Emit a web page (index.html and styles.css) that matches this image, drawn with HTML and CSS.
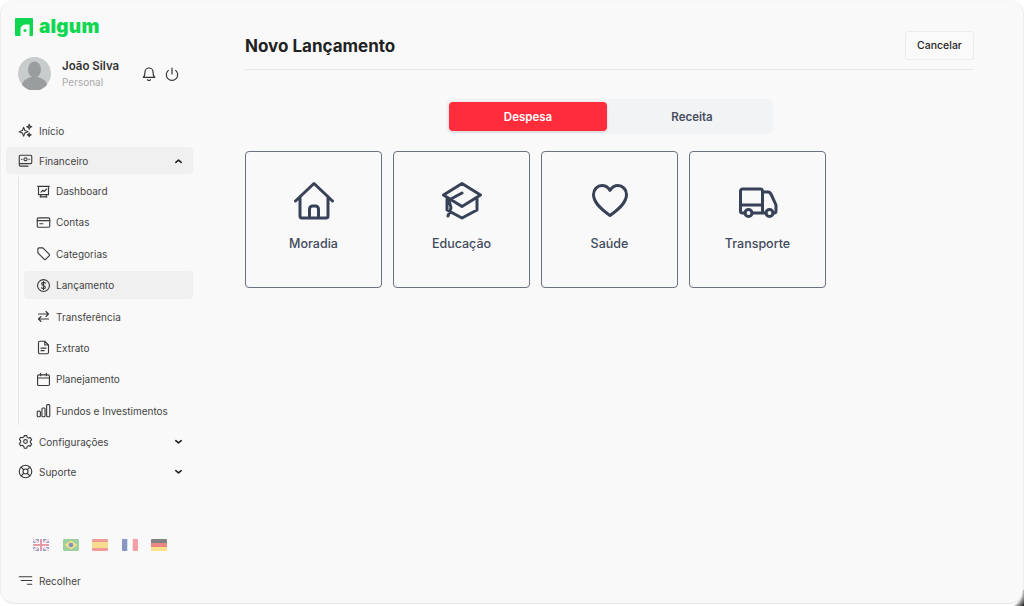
FILE: index.html
```html
<!DOCTYPE html>
<html>

<head>
    <title>Novo Lançamento</title>
    <link rel="stylesheet" href="styles.css">
</head>

<body>
    <div class="window">
        <aside class="sidebar">
            <div class="logo">
                <svg class="logo-mark" width="18" height="18" viewBox="0 0 18 18">
                    <rect width="18" height="18" rx="1" fill="#0fd850" />
                    <path d="M5.5 18v-6.500a5 5 0 0 1 5-5h4v11.500z" fill="#fafafa" />
                    <circle cx="10" cy="12.500" r="1.500" fill="#0fd850" />
                </svg>
                <span class="logo-text">algum</span>
            </div>

            <div class="profile">
                <svg class="avatar" width="33" height="33" viewBox="0 0 33 33">
                    <circle cx="16.5" cy="16.5" r="16.5" fill="#c9cccc" />
                    <ellipse cx="16.5" cy="12.5" rx="6.5" ry="8" fill="#9a9d9e" />
                    <path d="M4 28c1-6 7-7 9-8h7c2 1 8 2 9 8a16.500 16.500 0 0 1-25 0z" fill="#9a9d9e" />
                </svg>
                <div class="profile-info">
                    <div class="profile-name">João Silva</div>
                    <div class="profile-plan">Personal</div>
                </div>
                <svg class="top-icon" width="16" height="16" viewBox="0 0 24 24">
                    <path d="M6 9a6 6 0 0 1 12 0c0 6 2.500 8 2.500 8h-17S6 15 6 9zM10 20.500a2.200 2.200 0 0 0 4 0" />
                </svg>
                <svg class="top-icon" width="16" height="16" viewBox="0 0 24 24">
                    <path d="M12 3v9M6.500 6.500a8.500 8.500 0 1 0 11 0" />
                </svg>
            </div>

            <nav class="menu">
                <a class="menu-item">
                    <svg class="menu-icon" viewBox="0 0 24 24"><path d="M9 7l2 5 5 2-5 2-2 5-2-5-5-2 5-2zM18 2l1 3 3 1-3 1-1 3-1-3-3-1 3-1zM18 16l.8 2.200 2.200.8-2.200.8-.8 2.200-.8-2.200-2.200-.8 2.200-.8z" /></svg>
                    Início
                </a>
                <a class="menu-item active">
                    <svg class="menu-icon" viewBox="0 0 24 24"><rect x="2" y="3.500" width="20" height="13.500" rx="2" /><circle cx="12" cy="10" r="2.500" /><path d="M5.500 10h1M17.500 10h1M2 17v2a2 2 0 0 0 2 2h12" /></svg>
                    Financeiro
                    <svg class="chevron" viewBox="0 0 10 6"><path d="M2 4.500L5 2l3 2.500" /></svg>
                </a>

                <div class="submenu">
                    <a class="sub-item">
                        <svg class="menu-icon" viewBox="0 0 24 24"><path d="M4 4h16v13H4zM2.500 3.500h19M8 17l-1 4M16 17l1 4M6.500 20.500h11M8 13l3-3 2 2 4-4" /></svg>
                        Dashboard
                    </a>
                    <a class="sub-item">
                        <svg class="menu-icon" viewBox="0 0 24 24"><rect x="2" y="4.500" width="20" height="15" rx="2" /><path d="M2 9h20M6 14h5" /></svg>
                        Contas
                    </a>
                    <a class="sub-item">
                        <svg class="menu-icon" viewBox="0 0 24 24"><path d="M3 5a2 2 0 0 1 2-2h6l10 10a2 2 0 0 1 0 2.800L15.800 21a2 2 0 0 1-2.800 0L3 11z" /></svg>
                        Categorias
                    </a>
                    <a class="sub-item current">
                        <svg class="menu-icon" viewBox="0 0 24 24"><circle cx="12" cy="12" r="9.500" /><path d="M15 8.500c-.5-1-1.500-1.500-3-1.500-2 0-3 1-3 2.400s1 2 3 2.600 3 1.200 3 2.600-1 2.400-3 2.400c-1.500 0-2.500-.5-3-1.500M12 5.500v13" /></svg>
                        Lançamento
                    </a>
                    <a class="sub-item">
                        <svg class="menu-icon" viewBox="0 0 24 24"><path d="M4 8h16M16 4l4 4-4 4M20 16H4M8 12l-4 4 4 4" /></svg>
                        Transferência
                    </a>
                    <a class="sub-item">
                        <svg class="menu-icon" viewBox="0 0 24 24"><path d="M4 4a2 2 0 0 1 2-2h8l6 6v12a2 2 0 0 1-2 2H6a2 2 0 0 1-2-2zM14 2v6h6M8 13h8M8 17h5" /></svg>
                        Extrato
                    </a>
                    <a class="sub-item">
                        <svg class="menu-icon" viewBox="0 0 24 24"><rect x="2.500" y="4.500" width="19" height="17" rx="2" /><path d="M2.500 9.500h19M7.500 2v4M16.500 2v4" /></svg>
                        Planejamento
                    </a>
                    <a class="sub-item">
                        <svg class="menu-icon" viewBox="0 0 24 24"><rect x="2" y="13" width="5" height="9" rx="1.500" /><rect x="9.500" y="8" width="5" height="14" rx="1.500" /><rect x="17" y="2.500" width="5" height="19.500" rx="1.500" /></svg>
                        Fundos e Investimentos
                    </a>
                </div>

                <a class="menu-item">
                    <svg class="menu-icon" viewBox="0 0 24 24"><circle cx="12" cy="12" r="3" /><path d="M10 2.500h4l.7 2.800 2.300 1.300 2.800-.8 2 3.400-2 2.100v2.600l2 2.100-2 3.400-2.800-.8-2.300 1.300-.7 2.800h-4l-.7-2.800L7 18.100l-2.800.8-2-3.400 2-2.100v-2.600l-2-2.100 2-3.400 2.800.8 2.300-1.300z" /></svg>
                    Configurações
                    <svg class="chevron" viewBox="0 0 10 6"><path d="M2 1.500L5 4l3-2.500" /></svg>
                </a>
                <a class="menu-item">
                    <svg class="menu-icon" viewBox="0 0 24 24"><circle cx="12" cy="12" r="10" /><circle cx="12" cy="12" r="4" /><path d="M5 5l4.200 4.200M19 5l-4.200 4.200M5 19l4.200-4.200M19 19l-4.200-4.200" /></svg>
                    Suporte
                    <svg class="chevron" viewBox="0 0 10 6"><path d="M2 1.500L5 4l3-2.500" /></svg>
                </a>
            </nav>

            <div class="flags">
                <svg class="flag" viewBox="0 0 16 12"><rect width="16" height="12" rx="1" fill="#7d8fc4" /><path d="M0 0l16 12M16 0L0 12" stroke="#fff" stroke-width="2.400" /><path d="M0 0l16 12M16 0L0 12" stroke="#e88a96" stroke-width=".8" /><path d="M8 0v12M0 6h16" stroke="#fff" stroke-width="4" /><path d="M8 0v12M0 6h16" stroke="#e88a96" stroke-width="2" /></svg>
                <svg class="flag" viewBox="0 0 16 12"><rect width="16" height="12" rx="1" fill="#8cc98f" /><path d="M8 1.500L14.500 6 8 10.500 1.500 6z" fill="#f2dc78" /><circle cx="8" cy="6" r="2.300" fill="#6f80b8" /></svg>
                <svg class="flag" viewBox="0 0 16 12"><rect width="16" height="12" rx="1" fill="#f08a8a" /><rect y="3" width="16" height="6" fill="#f8d77c" /></svg>
                <svg class="flag" viewBox="0 0 16 12"><rect width="16" height="12" rx="1" fill="#fff" /><rect width="5.300" height="12" fill="#7487bd" /><rect x="10.700" width="5.300" height="12" fill="#f58f99" /></svg>
                <svg class="flag" viewBox="0 0 16 12"><rect width="16" height="4" fill="#6e6e6e" /><rect y="4" width="16" height="4" fill="#e8736f" /><rect y="8" width="16" height="4" fill="#f8dc7a" /></svg>
            </div>

            <a class="menu-item collapse">
                <svg class="menu-icon" viewBox="0 0 24 24"><path d="M2 6h20M5 12h17M15 18h7" /></svg>
                Recolher
            </a>
        </aside>

        <main class="content">
            <header class="page-header">
                <h1>Novo Lançamento</h1>
                <button class="cancel">Cancelar</button>
            </header>

            <div class="tabs">
                <button class="tab selected">Despesa</button>
                <button class="tab">Receita</button>
            </div>

            <div class="cards">
                <div class="card">
                    <svg class="card-icon" viewBox="0 0 40 40"><path d="M1.500 20L20 2.500 38.500 20M6 15.500V35a2 2 0 0 0 2 2h24a2 2 0 0 0 2-2V15.500M15.500 37V28a3 3 0 0 1 3-3h3a3 3 0 0 1 3 3v9" /></svg>
                    Moradia
                </div>
                <div class="card">
                    <svg class="card-icon" viewBox="0 0 40 40"><path d="M20 2.500L38.500 14 20 25.500 1.500 14zM5 18v11l15 8 15-8V18M20 12L7 19l2 8-3 8" /></svg>
                    Educação
                </div>
                <div class="card">
                    <svg class="card-icon" viewBox="0 0 40 40"><path d="M20 34.500C9.500 27 3.500 21 3.500 13.500 3.500 8.500 7.500 4.500 12 4.500c3.200 0 6 1.800 8 4.800 2-3 4.800-4.800 8-4.800 4.500 0 8.500 4 8.500 9 0 7.500-6 13.500-16.500 21z" /></svg>
                    Saúde
                </div>
                <div class="card">
                    <svg class="card-icon" viewBox="0 0 40 40"><path d="M7 32H4.500a2 2 0 0 1-2-2V10a2 2 0 0 1 2-2h18a2 2 0 0 1 2 2v22H14M24.500 11H30c1.500 0 2.500 1 3.200 2.500L38 24v6a2 2 0 0 1-2 2h-1M24.500 32H28M2.500 24h22" /><circle cx="10.500" cy="32" r="3.500" /><circle cx="31.500" cy="32" r="3.500" /></svg>
                    Transporte
                </div>
            </div>
        </main>
    </div>
    <div class="corner"></div>
</body>

</html>
```

FILE: styles.css
```css
* {
    box-sizing: border-box;
}

html, body {
    height: 100%;
}

body {
    position: relative;
    margin: 0;
    font-family: Inter, "Noto Sans", sans-serif;
    background-color: #fff;
    overflow: hidden;
}

.window {
    display: flex;
    width: 100%;
    height: 604px;
    background-color: #f9f9f9;
    border: 1px solid #eeeeee;
    border-bottom-color: #e4e4e4;
    border-top-color: #f6f6f6;
    border-radius: 14px;
}

/* the dark desktop showing behind the bottom right corner */
.corner {
    position: absolute;
    right: 0;
    bottom: 0;
    width: 20px;
    height: 16px;
    background: radial-gradient(circle at 0 0, transparent 18px, #aaa 20px, #222 25px);
}

.sidebar {
    display: flex;
    flex-direction: column;
    width: 192px;
    flex-shrink: 0;
    padding: 16px 0 0 5px;
}

.logo {
    display: flex;
    align-items: center;
    gap: 6px;
    height: 20px;
    padding-left: 9px;
}

.logo-text {
    font-size: 19px;
    font-weight: 900;
    color: #0fd850;
    letter-spacing: 0.2px;
    line-height: 20px;
}

.profile {
    display: flex;
    align-items: center;
    height: 33px;
    margin-top: 20px;
    padding-left: 12px;
}

.profile-info {
    margin-left: 11px;
    width: 79px;
}

.profile-name {
    font-size: 11.500px;
    font-weight: 600;
    color: #333;
    line-height: 18px;
}

.profile-plan {
    font-size: 10px;
    color: #aaa;
    line-height: 15px;
}

.top-icon {
    margin: 0 7px 0 0;
    fill: none;
    stroke: #333;
    stroke-width: 1.800;
    stroke-linecap: round;
    stroke-linejoin: round;
}

.menu {
    margin-top: 27px;
}

.menu-item, .sub-item {
    display: flex;
    align-items: center;
    font-size: 10px;
    color: #444;
}

.menu-item {
    gap: 6px;
    height: 27px;
    padding: 0 10px 0 12px;
    border-radius: 4px;
    margin-bottom: 3px;
}

.menu-item.active {
    background-color: #f0f0f0;
}

.menu-icon {
    width: 15px;
    height: 15px;
    flex-shrink: 0;
    fill: none;
    stroke: #3a3a3a;
    stroke-width: 1.800;
    stroke-linecap: round;
    stroke-linejoin: round;
}

.chevron {
    width: 9px;
    height: 6px;
    margin-left: auto;
    fill: none;
    stroke: #222;
    stroke-width: 1.800;
    stroke-linecap: round;
    stroke-linejoin: round;
}

.submenu {
    margin: 0 0 0 12px;
    padding-left: 5px;
    border-left: 1px solid #e4e4e4;
}

.sub-item {
    gap: 5px;
    height: 28px;
    padding-left: 12px;
    margin-bottom: 3.400px;
    border-radius: 4px;
}

.sub-item.current {
    background-color: #f0f0f0;
}

.flags {
    display: flex;
    gap: 13.500px;
    margin-top: auto;
    padding-left: 27px;
}

.flag {
    width: 16px;
    height: 12px;
    border-radius: 1px;
    opacity: 0.85;
}

.collapse {
    margin: 16px 0 9px;
}

.content {
    flex: 1;
    padding: 29px 49px 0 52px;
}

.page-header {
    display: flex;
    justify-content: space-between;
    align-items: center;
    height: 39px;
    box-sizing: content-box;
    border-bottom: 1px solid #e8e8e8;
}

.page-header h1 {
    margin: 0 0 8px;
    font-size: 17px;
    font-weight: 700;
    color: #222;
}

.cancel {
    width: 69px;
    height: 29px;
    margin-bottom: 9px;
    font-family: inherit;
    font-size: 10.500px;
    font-weight: 500;
    color: #222;
    background-color: #fafafa;
    border: 1px solid #ececec;
    border-radius: 3px;
}

.tabs {
    display: flex;
    width: 327px;
    height: 35px;
    margin: 29px 0 0 201px;
    padding: 3px;
    background-color: #f2f3f5;
    border-radius: 6px;
}

.tab {
    flex: 1;
    padding: 0 0 0 7px;
    font-family: inherit;
    font-size: 11.500px;
    font-weight: 600;
    color: #474d5c;
    background: none;
    border: none;
    border-radius: 4px;
}

.tab.selected {
    flex: 0 0 158px;
    padding: 0;
    color: #fff;
    background-color: #ff2d3c;
    box-shadow: 0 1px 3px rgba(0, 0, 0, 0.15);
}

.cards {
    display: flex;
    gap: 11px;
    margin-top: 17px;
}

.card {
    display: flex;
    flex-direction: column;
    align-items: center;
    width: 137px;
    height: 137px;
    padding-top: 29px;
    font-size: 12.500px;
    font-weight: 500;
    color: #414a5c;
    border: 1px solid #6b7280;
    border-radius: 4px;
}

.card-icon {
    width: 40px;
    height: 40px;
    margin-bottom: 15px;
    fill: none;
    stroke: #374258;
    stroke-width: 3;
    stroke-linecap: round;
    stroke-linejoin: round;
}
```
